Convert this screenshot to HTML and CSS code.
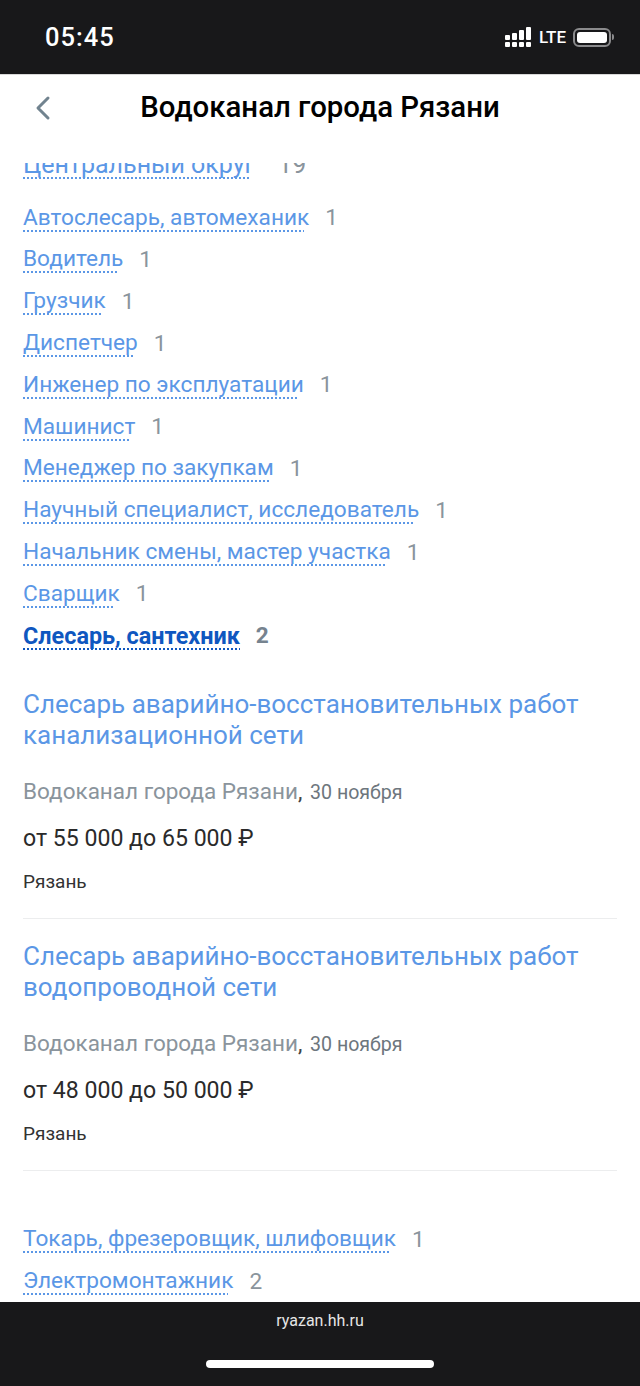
FILE: index.html
```html
<!DOCTYPE html>
<html lang="ru">
<head>
  <meta charset="UTF-8">
  <meta name="viewport" content="width=device-width, initial-scale=1.0">
  <link rel="stylesheet" href="styles.css">
  <title>Водоканал города Рязани</title>
</head>
<body>

<div class="status-bar">
  <span class="time">05:45</span>
  <div class="status-icons">
    <svg class="signal" width="27" height="20" viewBox="0 0 27 20" fill="#fff">
      <rect x="0" y="8" width="5" height="5" rx="1"/>
      <rect x="0" y="15" width="5" height="5" rx="1"/>
      <rect x="7" y="6" width="5" height="7" rx="1"/>
      <rect x="7" y="15" width="5" height="5" rx="1"/>
      <rect x="14" y="3" width="5" height="10" rx="1"/>
      <rect x="14" y="15" width="5" height="5" rx="1"/>
      <rect x="21" y="0" width="5" height="13" rx="1"/>
      <rect x="21" y="15" width="5" height="5" rx="1"/>
    </svg>
    <span class="lte">LTE</span>
    <div class="battery"><div class="battery-level"></div></div>
    <div class="battery-cap"></div>
  </div>
</div>

<div class="header">
  <svg class="back" width="16" height="26" viewBox="0 0 16 26" fill="none">
    <path d="M13 3 L3 13 L13 23" stroke="#71838f" stroke-width="3" stroke-linecap="round" stroke-linejoin="round"/>
  </svg>
  <h1>Водоканал города Рязани</h1>
</div>

<div class="content">
  <div class="row first"><a class="link">Центральный округ</a><span class="count">19</span></div>
  <div class="row"><a class="link">Автослесарь, автомеханик</a><span class="count">1</span></div>
  <div class="row"><a class="link">Водитель</a><span class="count">1</span></div>
  <div class="row"><a class="link">Грузчик</a><span class="count">1</span></div>
  <div class="row"><a class="link">Диспетчер</a><span class="count">1</span></div>
  <div class="row"><a class="link">Инженер по эксплуатации</a><span class="count">1</span></div>
  <div class="row"><a class="link">Машинист</a><span class="count">1</span></div>
  <div class="row"><a class="link">Менеджер по закупкам</a><span class="count">1</span></div>
  <div class="row"><a class="link">Научный специалист, исследователь</a><span class="count">1</span></div>
  <div class="row"><a class="link">Начальник смены, мастер участка</a><span class="count">1</span></div>
  <div class="row"><a class="link">Сварщик</a><span class="count">1</span></div>
  <div class="row active"><a class="link">Слесарь, сантехник</a><span class="count">2</span></div>

  <div class="job">
    <a class="job-title">Слесарь аварийно-восстановительных работ канализационной сети</a>
    <p class="job-company"><span class="company-name">Водоканал города Рязани</span>, <span class="job-date">30 ноября</span></p>
    <p class="job-salary">от 55 000 до 65 000 ₽</p>
    <p class="job-city">Рязань</p>
  </div>
  <div class="job">
    <a class="job-title">Слесарь аварийно-восстановительных работ водопроводной сети</a>
    <p class="job-company"><span class="company-name">Водоканал города Рязани</span>, <span class="job-date">30 ноября</span></p>
    <p class="job-salary">от 48 000 до 50 000 ₽</p>
    <p class="job-city">Рязань</p>
  </div>

  <div class="rest">
    <div class="row"><a class="link">Токарь, фрезеровщик, шлифовщик</a><span class="count">1</span></div>
    <div class="row"><a class="link">Электромонтажник</a><span class="count">2</span></div>
  </div>
</div>

<div class="footer">
  <span class="domain">ryazan.hh.ru</span>
  <div class="home-bar"></div>
</div>

</body>
</html>
```

FILE: styles.css
```css
html, body {
  height: 100%;
}

body {
  font-family: Roboto, "Noto Sans", sans-serif;
  background-color: #fff;
  display: flex;
  flex-direction: column;
  height: 100vh;
  margin: 0;
  overflow: hidden;
}

p {
  margin: 0;
}

.status-bar {
  flex: none;
  box-sizing: border-box;
  height: 75px;
  background-color: #18181a;
  border-bottom: 1px solid #d8d8d8;
  display: flex;
  align-items: center;
  justify-content: space-between;
  padding: 0 26px 0 45px;
  color: #fff;
}

.time {
  font-size: 25.5px;
  font-weight: 500;
  letter-spacing: 1px;
}

.status-icons {
  display: flex;
  align-items: center;
}

.lte {
  font-size: 17px;
  font-weight: 500;
  margin: 0 7px 0 7px;
}

.battery {
  box-sizing: border-box;
  width: 38px;
  height: 19px;
  border: 2px solid #8a8a8c;
  border-radius: 6px;
  padding: 2px;
}

.battery-level {
  height: 100%;
  background-color: #fff;
  border-radius: 3px;
}

.battery-cap {
  width: 2px;
  height: 6px;
  margin-left: 1px;
  background-color: #8a8a8c;
  border-radius: 0 2px 2px 0;
}

.header {
  flex: none;
  height: 88px;
  display: flex;
  align-items: center;
  justify-content: center;
  position: relative;
  padding-bottom: 24px;
  box-sizing: border-box;
}

.header h1 {
  margin: 0;
  font-size: 29.4px;
  font-weight: 500;
  color: #000;
}

.back {
  position: absolute;
  left: 35px;
  top: 20px;
}

.content {
  flex: 1;
  overflow: hidden;
  padding: 0 23px;
}

.row {
  height: 41.8px;
  display: flex;
  align-items: center;
  gap: 16px;
  font-size: 22.65px;
}

.row.first {
  margin-top: -19px;
  margin-bottom: 11px;
  gap: 23px;
  font-size: 25px;
}

/* dashed underline that stops a little short of the text, like the original */
.link {
  color: #5b97e6;
  line-height: 24px;
  padding: 2px 0;
  background-image: repeating-linear-gradient(90deg, currentColor 0 2px, transparent 2px 4px);
  background-repeat: no-repeat;
  background-position: left bottom;
  background-size: calc(100% - 5px) 2px;
}

.count {
  color: #8a949c;
}

.active .link {
  color: #0f57c0;
  font-size: 23.4px;
  font-weight: 700;
  background-size: 100% 2px;
}

.active .count {
  font-weight: 700;
  color: #76838f;
}

.job {
  padding: 32px 0 25px;
  border-bottom: 1px solid #ecedee;
}

.job + .job {
  padding-top: 22px;
}

.job-title {
  display: block;
  font-size: 26px;
  line-height: 31px;
  color: #5b97e6;
}

.job-company {
  margin-top: 28px;
  font-size: 22.5px;
  color: #444;
  line-height: 24px;
}

.company-name {
  color: #8a949c;
}

.job-date {
  margin-left: 2px;
  font-size: 19.6px;
  color: #6d767d;
}

.job-salary {
  margin-top: 22px;
  font-size: 23.1px;
  line-height: 24px;
  color: #2a2a2a;
}

.job-city {
  margin-top: 20px;
  font-size: 19px;
  line-height: 22px;
  color: #333;
}

.rest {
  margin-top: 48px;
}

.footer {
  flex: none;
  box-sizing: border-box;
  height: 84px;
  background-color: #18181a;
  display: flex;
  flex-direction: column;
  align-items: center;
  padding-top: 9px;
}

.domain {
  color: #e6e6e6;
  font-size: 16px;
  line-height: 19px;
}

.home-bar {
  width: 228px;
  height: 8px;
  margin-top: 30px;
  background-color: #fff;
  border-radius: 4px;
}
```
